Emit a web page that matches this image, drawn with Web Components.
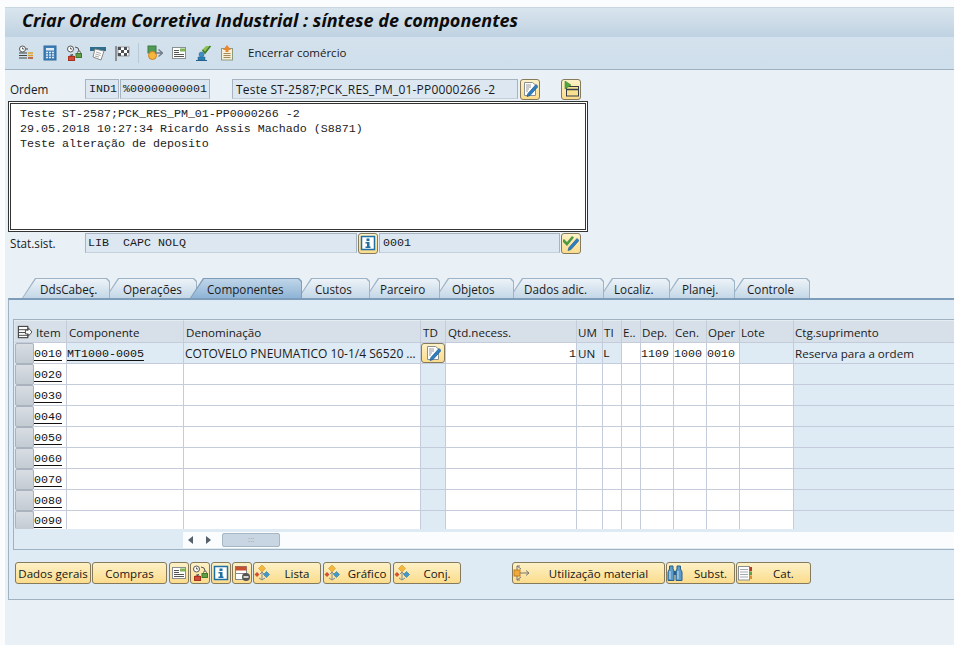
<!DOCTYPE html>
<html lang="pt"><head><meta charset="utf-8"><title>Criar Ordem Corretiva Industrial</title>
<style>
html,body{margin:0;padding:0;background:#fbfcfd;width:954px;height:645px;overflow:hidden}
body{font:11.700px "Open Sans","Liberation Sans",sans-serif;color:#111}
</style></head><body>
<sap-shell>
  <sap-titlebar slot="title">Criar Ordem Corretiva Industrial : síntese de componentes</sap-titlebar>
  <sap-toolbar slot="toolbar"></sap-toolbar>
  <sap-header slot="form"></sap-header>
  <sap-tabs slot="tabs"></sap-tabs>
  <sap-panel slot="panel">
    <sap-table></sap-table>
    <sap-scroll></sap-scroll>
    <sap-actions slot="actions"></sap-actions>
  </sap-panel>
</sap-shell>
<script>
const ICONS={
overview:`<circle cx="4.5" cy="4" r="3" fill="#fff" stroke="#555"/><path d="M4.5 2.500V4H6" stroke="#555" fill="none"/><path d="M1 8h8M1 10.500h8M1 13h8M8 4h2" stroke="#444" stroke-width="1.200"/><path d="M10 8h5M10 10.500h5" stroke="#d9a12c" stroke-width="1.500"/><path d="M10 13h5" stroke="#b5452a" stroke-width="1.500"/>`,
calc:`<rect x="2" y="1" width="12" height="14" fill="#3f7fb8" stroke="#2f6a9f"/><rect x="4" y="3" width="8" height="2.500" fill="#dfeaf3"/><path d="M4 7.500h2M7 7.500h2M10 7.500h2M4 10h2M7 10h2M10 10h2M4 12.500h2M7 12.500h2M10 12.500h2" stroke="#dfeaf3" stroke-width="1.500"/>`,
status:`<circle cx="4.500" cy="4" r="3" fill="#fff" stroke="#555"/><path d="M4.500 2.500V4H6M9 2l3 1 1 3M7 9l-2 2" stroke="#555" fill="none"/><path d="M11.500 8.500v-1a1.500 1.500 0 0 1 3 0v1" stroke="#666" fill="none"/><rect x="10" y="8.500" width="5.500" height="4" fill="#5f9e45" stroke="#3e7a2c"/><path d="M4 12v-1a1.500 1.500 0 0 1 3 0v1" stroke="#666" fill="none"/><rect x="2.500" y="11.500" width="6" height="4" fill="#d24a38" stroke="#a8321f"/>`,
card:`<rect x="0" y="2" width="16" height="4" fill="#2f6f8c"/><path d="M5 4l9 2-3 9-8-3z" fill="#fff" stroke="#888"/><path d="M6 7l5 1.500M5.500 9l5 1.500M5 11l4 1" stroke="#aaa"/>`,
flag:`<path d="M2 1v15" stroke="#777" stroke-width="1.500"/><path d="M4 2h11v9H4z" fill="#fff" stroke="#999"/><path d="M4 2h3v3H4zM10 2h3v3h-3zM7 5h3v3H7zM13 5h2v3h-2zM4 8h3v3H4zM10 8h3v3h-3z" fill="#4a4f58"/>`,
flow:`<rect x="1" y="1" width="8" height="7" fill="#4f9a55" stroke="#3a7a40"/><circle cx="5.500" cy="10.500" r="4" fill="#f4b63f" stroke="#cf7f20"/><path d="M11.500 4.500l4 3.500-4 3.500M8 8h7.500" stroke="#6f7d8a" fill="none" stroke-width="1.300"/>`,
doc:`<rect x="1.500" y="2.500" width="13" height="11" fill="#fff" stroke="#8a8f92"/><rect x="9" y="3.500" width="5" height="3" fill="#7fb356"/><path d="M3 5.500h5M3 7.500h5M3 9.500h10M3 11.500h10" stroke="#555"/>`,
person:`<path d="M1 15.500h11" stroke="#24608a"/><path d="M3 15v-3h7v3z" fill="#2f7fb5" stroke="#24608a" stroke-width=".5"/><circle cx="6.500" cy="9.500" r="2.500" fill="#3d90c6" stroke="#24608a" stroke-width=".5"/><path d="M7 5l4-4h5l-6 8z" fill="#8cc152"/><path d="M7.500 5l2.500 3 5.500-7" stroke="#3e7a2c" stroke-width="1.500" fill="none"/>`,
rel:`<rect x="2.500" y="3.500" width="11" height="11.500" fill="#f5efd8" stroke="#8c9a80"/><path d="M8 0l4 5H4z" fill="#e9862e"/><rect x="6.500" y="4" width="3" height="3" fill="#e9862e"/><path d="M4.500 8.500h7M4.500 10.500h7M4.500 12.500h7" stroke="#a38a56"/>`,
edit:`<path d="M2.500 1.500h8l3 2.500v10.500h-11z" fill="#fff" stroke="#8a8f92"/><path d="M4 4h5M4 6h5M4 8h3M4 10h2" stroke="#999"/><path d="M14 3.500l2 2-8 9-3 1 1-3z" fill="#2f7fc0" stroke="#1f5f95" stroke-width=".8"/>`,
tree:`<rect x="3.500" y="5.500" width="12" height="9.500" fill="#f9e08e" stroke="#33404a"/><path d="M3.500 8.500h12" stroke="#33404a" stroke-width="1.500"/><path d="M2 0v8l6-4z" fill="#4fa83d" stroke="#3b8a2d" stroke-width=".6"/>`,
info:`<rect x="1.500" y="1.500" width="13" height="13" fill="#fff" stroke="#1f6fa5" stroke-width="1.500"/><rect x="6.500" y="3.500" width="3" height="2.500" fill="#1f6fa5"/><path d="M5.500 7h4v4.500h1V13h-5v-1.500h1.500V8.500H5.500z" fill="#1f6fa5"/>`,
checkedit:`<path d="M1 4l3 3 5-6 2 1.500-7 8.500-5-5z" fill="#4f9a45"/><path d="M14 3.500l2 2-8 9-3 1 1-3z" fill="#2f7fc0" stroke="#1f5f95" stroke-width=".7"/>`,
config:`<rect x="1.500" y="1.500" width="10" height="12" fill="#fff" stroke="#444" stroke-width="1.200"/><path d="M1.500 5h10M1.500 8h10M1.500 11h10" stroke="#444"/><path d="M9 5.500h3V3l4 4.500-4 4.500V9.500H9z" fill="#fff" stroke="#444"/>`,
delrow:`<rect x="1.500" y="1.500" width="11" height="13" fill="#fff" stroke="#888"/><rect x="1.500" y="1.500" width="11" height="4" fill="#c9502f"/><path d="M1.500 8.500h11" stroke="#888"/><circle cx="12" cy="12" r="4" fill="#555"/><path d="M9.500 12h5" stroke="#fff" stroke-width="1.500"/>`,
diamonds:`<path d="M8 0l3.500 3.500L8 7 4.500 3.500z" fill="#f4b63f" stroke="#c98a1c" stroke-width=".5"/><path d="M3 7l2.500 2.500L3 12 .500 9.500z" fill="#d2502e"/><path d="M12.500 6.500l3 3-3 3-3-3z" fill="#3f9ac9" stroke="#22668e" stroke-width=".5"/><path d="M8 7v8M6 9l2-2 2 2M5 13l3 2 3-2" stroke="#7d8a96" fill="none"/>`,
usage:`<rect x="1" y="5" width="6" height="6" fill="#f0a93a" stroke="#c47f1c"/><path d="M7 8h9M13 5.500L16 8l-3 2.500M4 5V1h3M4 1l4 3M4 11v4h3M4 15l4-3" stroke="#777" fill="none"/>`,
binoc:`<path d="M2.500 1h3.500v3l1 2v9.500H1V7l1.500-3zM10 1h3.500v3L15 7v8.500H9V6l1-2z" fill="#5c9ccb" stroke="#2a5f88"/><rect x="6.800" y="6" width="2.400" height="4" fill="#2a5f88"/><path d="M3 6v8M11 6v8" stroke="#b8d7ec" stroke-width="1.200"/>`,
cat:`<rect x="1.500" y="1.500" width="11" height="13.500" fill="#fff" stroke="#8a8f92"/><path d="M3 4.500h8M3 7h8M3 9.500h8M3 12h8" stroke="#a5a9b0"/><rect x="12.500" y="2" width="2.500" height="4" fill="#b83a2a"/><rect x="12.500" y="6.500" width="2.500" height="3.500" fill="#5f9e45"/><rect x="12.500" y="10.500" width="2.500" height="3.500" fill="#d9932c"/>`
};
function def(name,css,html,init){
  customElements.define(name,class extends HTMLElement{
    connectedCallback(){
      if(this.shadowRoot)return;
      const r=this.attachShadow({mode:'open'});
      r.innerHTML=`<style>${css}</style>${typeof html==='function'?html(this):html}`;
      if(init)init(this,r);
    }
  });
}
def('sap-icon',`:host{display:inline-flex;flex:none;width:var(--s,16px);height:var(--s,16px)}svg{width:100%;height:100%;display:block}`,
  h=>`<svg viewBox="0 0 16 16" aria-hidden="true">${ICONS[h.getAttribute('name')]||''}</svg>`);
def('sap-shell',`:host{display:block;margin:7px 0 0 5px;width:949px;height:638px;background:#e9f0f6;overflow:hidden}`,
  `<slot name="title"></slot><slot name="toolbar"></slot><slot name="form"></slot><slot name="tabs"></slot><slot name="panel"></slot>`);
def('sap-titlebar',`:host{display:flex;align-items:center;height:30px;box-sizing:border-box;padding-left:17px;padding-bottom:6px;background:linear-gradient(#d9e5ee,#bfd2e1);border-top:1px solid #c8d6e0;
  font:italic bold 18px "Open Sans","Liberation Sans",sans-serif;letter-spacing:0;color:#0c0c0c;white-space:nowrap}`,`<slot></slot>`);
def('sap-toolbar',`:host{display:flex;align-items:center;height:33px;box-sizing:border-box;padding:0 0 1px 13px;background:linear-gradient(#d3e2ed,#cfdfeb);border-bottom:1px solid #9fb2c2;white-space:nowrap}
  sap-icon{margin-right:8px}.sep{width:1px;height:20px;background:#b9cad7;margin:0 8px 0 0}.t{margin-left:5px;color:#1a1a1a;font-size:11.500px}`,
  `<sap-icon name="overview"></sap-icon><sap-icon name="calc"></sap-icon><sap-icon name="status"></sap-icon><sap-icon name="card"></sap-icon><sap-icon name="flag"></sap-icon><span class="sep"></span><sap-icon name="flow"></sap-icon><sap-icon name="doc"></sap-icon><sap-icon name="person"></sap-icon><sap-icon name="rel"></sap-icon><span class="t">Encerrar comércio</span>`);
def('sap-field',`:host{display:flex;align-items:center;flex:none;height:20px;box-sizing:border-box;background:#dce7f1;border:1px solid #a7b4bf;border-bottom-color:#c5d0da;padding:0 3px;overflow:hidden;white-space:nowrap;color:#1a1a1a}
  :host([mono]){font:11.670px "Liberation Mono",monospace}`,`<slot></slot>`);
def('sap-iconbtn',`:host{display:inline-flex;align-items:center;justify-content:center;flex:none;box-sizing:border-box;width:var(--w,20px);height:var(--h,21px);
  background:linear-gradient(#fdf1c6,#fbdc8c);border:1px solid #857a5b;border-radius:3px;--s:16px}`,h=>`<sap-icon name="${h.getAttribute('name')}"></sap-icon>`);
def('sap-header',`:host{display:block;padding:9px 0 0 3px}
  .row{display:flex;align-items:center;height:20px}
  .l{width:77px;padding-left:2px;box-sizing:border-box;flex:none;color:#1a1a1a;font-size:11.700px}
  .ta{box-sizing:border-box;width:580px;height:131px;margin:2px 0 1px;background:#fff;border:1px solid #333;padding:1px;}
  .ti{box-sizing:border-box;height:100%;border:1px solid #333;padding:3px 0 0 9px;font:11.670px/15px "Liberation Mono",monospace;color:#222;white-space:pre}`,
  `<div class="row"><span class="l">Ordem</span>
    <sap-field mono style="width:34px;margin-right:1px">IND1</sap-field><sap-field mono style="width:90px;margin-right:22px;padding:0 2px">%00000000001</sap-field>
    <sap-field style="width:286px;margin-right:2px;letter-spacing:.2px;font-size:12px">Teste ST-2587;PCK_RES_PM_01-PP0000266 -2</sap-field><sap-iconbtn name="edit"></sap-iconbtn><sap-iconbtn name="tree" style="margin-left:21px"></sap-iconbtn></div>
  <div class="ta"><div class="ti">Teste ST-2587;PCK_RES_PM_01-PP0000266 -2
29.05.2018 10:27:34 Ricardo Assis Machado (S8871)
Teste alteração de deposito</div></div>
  <div class="row"><span class="l">Stat.sist.</span>
    <sap-field mono style="width:272px;margin-right:1px;white-space:pre;padding-left:2px">LIB  CAPC NOLQ</sap-field><sap-iconbtn name="info"></sap-iconbtn><sap-field mono style="width:181px;margin:0 1px">0001</sap-field><sap-iconbtn name="checkedit"></sap-iconbtn></div>`);
def('sap-tab',`:host{display:block;flex:none;height:20px;position:relative;box-sizing:border-box;padding-top:3px;color:#1c1c1c;white-space:nowrap}
  :host::before,:host::after{content:"";position:absolute;clip-path:polygon(13px 0,calc(100% - 3px) 0,100% 3px,100% 100%,0 100%)}
  :host::before{inset:0;background:#9db3c6}
  :host::after{inset:1px 1px 0 1px;background:linear-gradient(#edf3f8,#c4d7e7)}
  :host([active])::before{background:#7f9cb8}
  :host([active])::after{background:linear-gradient(#bfd5e9,#8fb4d6)}
  span{position:relative;z-index:1}`,`<span><slot></slot></span>`);
def('sap-tabs',`:host{display:flex;height:20px;margin-top:25px;padding-left:17px}`,`<slot></slot>`,(h)=>{
  const T=[['DdsCabeç.',22,110,40],['Operações',105,197,123],['Componentes',190,302,207],['Custos',298,370,315],['Parceiro',365,440,380],['Objetos',435,514,452],['Dados adic.',509,604,524],['Localiz.',599,670,614],['Planej.',665,735,682],['Controle',730,810,747]];
  T.forEach((t,i)=>{const e=document.createElement('sap-tab');e.textContent=t[0];
    if(i==2)e.setAttribute('active','');
    e.style.cssText=`width:${t[2]-t[1]}px;margin-left:${i?t[1]-T[i-1][2]:0}px;padding-left:${t[3]-t[1]}px;z-index:${i==2?50:20-i}`;h.appendChild(e);});
});
def('sap-panel',`:host{display:block;margin-left:3px;box-sizing:border-box;height:302px;background:#deeaf4;border-top:2px solid #7d9dba;border-bottom:1px solid #9fb2c2;border-left:1px solid #9fb2c2;padding-top:19px}
  .inner{margin-left:4px;height:231px;box-sizing:border-box;border:1px solid #9fb2c2;border-right:0;padding-left:1px}
  .act{margin:12px 0 0 6px}`,`<div class="inner"><slot></slot></div><div class="act"><slot name="actions"></slot></div>`);
def('sap-table',`:host{display:grid;grid-template-columns:19px 33px 117px 237px 25px 131px 26px 19px 19px 33px 33px 33px 54px 180px;grid-template-rows:23px repeat(8,21px) 18px;width:925px;font-size:11.600px}
  .h,.c{box-sizing:border-box;overflow:hidden;white-space:nowrap;display:flex;align-items:center;border-right:1px solid #c4cbda;color:#1a1a1a}
  .h{background:#d7e0e8;border-bottom:1px solid #c4cbda;border-top:1px solid #e4ebf1;padding:2px 0 0 2px}
  .h.n{padding-left:1px}
  .c{background:#fff;border-bottom:1px solid #c4cbda;padding-left:1px}
  .den{font-size:12px}
  .a{background:#deeaf4}
  .m{font:11.670px "Liberation Mono",monospace;padding-left:0;padding-top:1px}
  .u{text-decoration:underline;text-underline-offset:3px;text-decoration-thickness:1px;color:#111}
  .s{background:linear-gradient(#d8dde3,#c3cbd3);border:1px solid #aab3bd;border-radius:2px;padding:0}
  .last{border-bottom:0}
  .r{justify-content:flex-end}
  sap-icon{margin-left:0;--s:15px}`,'',(h,r)=>{
  const hd=['','Item','Componente','Denominação','TD','Qtd.necess.','UM','TI','E..','Dep.','Cen.','Oper','Lote','Ctg.suprimento'];
  let x='';
  hd.forEach((t,i)=>{x+=`<div class="h${i>=6?' n':''}" ${i==0?'style="border-right:0"':''}>${i==0?'<sap-icon name="config"></sap-icon>':t}</div>`;});
  const row1=['','0010','MT1000-0005','COTOVELO PNEUMATICO 10-1/4 S6520 …','','1','UN','L','','1109','1000','0010','','Reserva para a ordem'];
  for(let n=1;n<=9;n++){
    const id=String(n*10).padStart(4,'0');
    for(let c=0;c<14;c++){
      let cl='c',t='';
      if(n==9)cl+=' last';
      if(c==0){x+=`<div class="${cl} s"></div>`;continue;}
      if(c==1){x+=`<div class="${cl} m"><span class="u">${id}</span></div>`;continue;}
      if(n==1){
        t=row1[c];
        if(c==2){x+=`<div class="${cl} a m"><span class="u">${t}</span></div>`;continue;}
        if(c==3)cl+=' a den';
        if(c==4){x+=`<div class="${cl} a" style="padding:0;justify-content:center"><sap-iconbtn name="edit" style="--w:24px;--h:20px"></sap-iconbtn></div>`;continue;}
        if(c==5)cl+=' m r';
        if(c==6)cl+=' a';
        if(c==7)cl+=' a m';
        if(c>=9&&c<=11)cl+=' m';
        if(c==12||c==13)cl+=' a';
      }else if(c==4||c==13)cl+=' a';
      x+=`<div class="${cl}">${t}</div>`;
    }
  }
  r.innerHTML+=x;
});
def('sap-scroll',`:host{display:flex;align-items:center;height:16px;margin:3px 0 0 168px;background:#fbfcfd;width:900px}
  .a{width:0;height:0;border:4px solid transparent}
  .th{width:58px;height:14px;margin-left:11px;background:#c7d6e2;border:1px solid #a6b6c3;border-radius:2px;box-sizing:border-box;color:#8da0af;font:8px/11px "Liberation Sans",sans-serif;text-align:center;letter-spacing:0}`,
  `<span class="a" style="border-right:5px solid #55606a;border-left:0;margin-left:5px"></span><span style="width:13px"></span><span class="a" style="border-left:5px solid #55606a;border-right:0"></span><span class="th">:::</span>`);
def('sap-btn',`:host{display:inline-flex;align-items:center;flex:none;box-sizing:border-box;height:22px;background:linear-gradient(#fdf1c6,#fbdc8c);border:1px solid #857a5b;border-radius:3px;color:#161616;white-space:nowrap;position:relative;--s:16px;font-size:11.500px}
  .t{flex:1;text-align:center}
  sap-icon+.t{padding-left:4px}`,h=>`${h.getAttribute('icon')?`<sap-icon name="${h.getAttribute('icon')}"></sap-icon>`:''}<span class="t"><slot></slot></span>`);
def('sap-actions',`:host{display:flex;align-items:center;height:22px;gap:1px}
  sap-iconbtn{--w:20px;--h:22px}`,
  `<sap-btn style="width:76px">Dados gerais</sap-btn><sap-btn style="width:75px">Compras</sap-btn>
   <sap-iconbtn name="doc" style="margin-left:1px"></sap-iconbtn><sap-iconbtn name="status"></sap-iconbtn><sap-iconbtn name="info"></sap-iconbtn><sap-iconbtn name="delrow"></sap-iconbtn>
   <sap-btn icon="diamonds" style="width:68px">Lista</sap-btn><sap-btn icon="diamonds" style="width:68px;margin-left:1px">Gráfico</sap-btn><sap-btn icon="diamonds" style="width:68px;margin-left:1px">Conj.</sap-btn>
   <sap-btn icon="usage" style="width:153px;margin-left:50px">Utilização material</sap-btn><sap-btn icon="binoc" style="width:69px">Subst.</sap-btn><sap-btn icon="cat" style="width:75px">Cat.</sap-btn>`);
</script>
</body></html>
